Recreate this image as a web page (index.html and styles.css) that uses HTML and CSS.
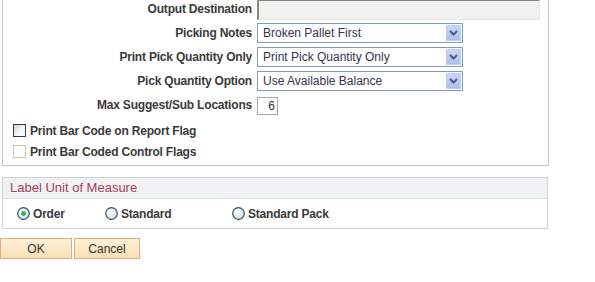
FILE: index.html
```html
<!DOCTYPE html>
<html>
<head>
<meta charset="utf-8">
<link rel="stylesheet" href="styles.css">
</head>
<body>
<div class="panel">
  <div class="form">
    <label class="lbl">Output Destination</label>
    <div class="ro-input"></div>
    <label class="lbl">Picking Notes</label>
    <div class="dd"><span class="dd-text">Broken Pallet First</span><span class="dd-btn"><svg width="9" height="6" viewBox="0 0 9 6"><path d="M1 1 L4.5 4.5 L8 1" fill="none" stroke="#4b5d86" stroke-width="2"/></svg></span></div>
    <label class="lbl">Print Pick Quantity Only</label>
    <div class="dd"><span class="dd-text">Print Pick Quantity Only</span><span class="dd-btn"><svg width="9" height="6" viewBox="0 0 9 6"><path d="M1 1 L4.5 4.5 L8 1" fill="none" stroke="#4b5d86" stroke-width="2"/></svg></span></div>
    <label class="lbl">Pick Quantity Option</label>
    <div class="dd"><span class="dd-text">Use Available Balance</span><span class="dd-btn"><svg width="9" height="6" viewBox="0 0 9 6"><path d="M1 1 L4.5 4.5 L8 1" fill="none" stroke="#4b5d86" stroke-width="2"/></svg></span></div>
    <label class="lbl">Max Suggest/Sub Locations</label>
    <div class="num">6</div>
  </div>
  <div class="checks">
    <div class="chk"><span class="box"></span>Print Bar Code on Report Flag</div>
    <div class="chk disabled"><span class="box"></span>Print Bar Coded Control Flags</div>
  </div>
</div>

<div class="group">
  <div class="ghead">Label Unit of Measure</div>
  <div class="radios">
    <div class="radio r-order"><svg width="13" height="13" viewBox="0 0 13 13"><defs><radialGradient id="rg" cx="0.35" cy="0.35" r="0.7"><stop offset="0" stop-color="#ffffff"/><stop offset="1" stop-color="#d8dde4"/></radialGradient></defs><circle cx="6.5" cy="6.5" r="5.8" fill="url(#rg)" stroke="#35506f" stroke-width="1.2"/><circle cx="6.5" cy="6.5" r="2.4" fill="#2fb34a"/></svg>Order</div>
    <div class="radio r-std"><svg width="13" height="13" viewBox="0 0 13 13"><circle cx="6.5" cy="6.5" r="5.8" fill="url(#rg)" stroke="#35506f" stroke-width="1.2"/></svg>Standard</div>
    <div class="radio"><svg width="13" height="13" viewBox="0 0 13 13"><circle cx="6.5" cy="6.5" r="5.8" fill="url(#rg)" stroke="#35506f" stroke-width="1.2"/></svg>Standard Pack</div>
  </div>
</div>

<div class="buttons">
  <button class="btn btn-ok">OK</button>
  <button class="btn btn-cancel">Cancel</button>
</div>
</body>
</html>
```

FILE: styles.css
```css
html, body {
  margin: 0;
  padding: 0;
  background: #ffffff;
  font-family: "Liberation Sans", Arial, sans-serif;
  font-size: 12px;
  color: #333333;
  overflow: hidden;
}

.panel {
  margin: -10px 0 0 2px;
  width: 545px;
  border: 1px solid #c6c6c6;
  padding: 8px 0 3px 0;
}

.form {
  display: grid;
  grid-template-columns: 249px 283px;
  grid-auto-rows: 20px;
  column-gap: 5px;
  row-gap: 4px;
}

.lbl {
  font-weight: bold;
  letter-spacing: -0.2px;
  text-align: right;
  align-self: center;
  white-space: nowrap;
  color: #3a3a3a;
}

.ro-input {
  box-sizing: border-box;
  height: 21px;
  width: 283px;
  background: #f1f1ef;
  border-top: 2px solid #8c867a;
  border-left: 2px solid #8c867a;
  border-right: 1px solid #e8e6e0;
  border-bottom: 1px solid #e8e6e0;
}

.dd {
  box-sizing: border-box;
  width: 206px;
  height: 20px;
  border: 1px solid #7f9db9;
  background: #fff;
  display: flex;
  align-items: center;
  padding: 0 1px 0 5px;
}

.dd-text {
  flex: 1;
  white-space: nowrap;
  color: #35334f;
}

.dd-btn {
  width: 15px;
  height: 16px;
  background: linear-gradient(to bottom, #c9d7f7 0%, #b8caf2 60%, #aabff0 100%);
  border: 1px solid #bdcdf3;
  box-sizing: border-box;
  display: flex;
  align-items: center;
  justify-content: center;
}

.num {
  box-sizing: border-box;
  align-self: end;
  width: 21px;
  height: 18px;
  border: 1px solid #a9a9a9;
  text-align: right;
  padding-right: 2px;
  line-height: 16px;
  color: #35334f;
}

.checks {
  margin-top: 5px;
  padding-left: 10px;
}

.chk {
  height: 21px;
  display: flex;
  align-items: center;
  font-weight: bold;
  letter-spacing: -0.2px;
  color: #3a3a3a;
}

.chk .box {
  box-sizing: border-box;
  width: 13px;
  height: 13px;
  margin-right: 4px;
  border: 1px solid #2b3e58;
  background: linear-gradient(135deg, #d4d4cc 0%, #f2f2ee 50%, #ffffff 100%);
}

.chk.disabled .box {
  border-color: #c9c5b8;
  background: #fff;
}

.group {
  margin: 11px 0 0 2px;
  width: 544px;
  border: 1px solid #d0d3d6;
}

.ghead {
  height: 20px;
  line-height: 20px;
  background: #eff2f3;
  border-bottom: 1px solid #dde0e2;
  padding-left: 7px;
  font-size: 13px;
  color: #a8405a;
}

.radios {
  height: 29px;
  display: flex;
  align-items: center;
  padding-left: 14px;
}

.radio {
  display: flex;
  align-items: center;
  gap: 3px;
  font-weight: bold;
  letter-spacing: -0.2px;
  color: #3a3a3a;
}

.r-order { width: 88px; }
.r-std { width: 127px; }

.buttons {
  margin-top: 9px;
  display: flex;
  gap: 2px;
}

.btn {
  height: 21px;
  padding: 0;
  margin: 0;
  font-family: "Liberation Sans", Arial, sans-serif;
  font-size: 12px;
  color: #333;
  border: 1px solid #deae80;
  background: linear-gradient(to bottom, #fdf0d8 0%, #fbe6c4 60%, #f9dfb5 100%);
  text-align: center;
}

.btn-ok { width: 72px; }
.btn-cancel { width: 66px; }
```
